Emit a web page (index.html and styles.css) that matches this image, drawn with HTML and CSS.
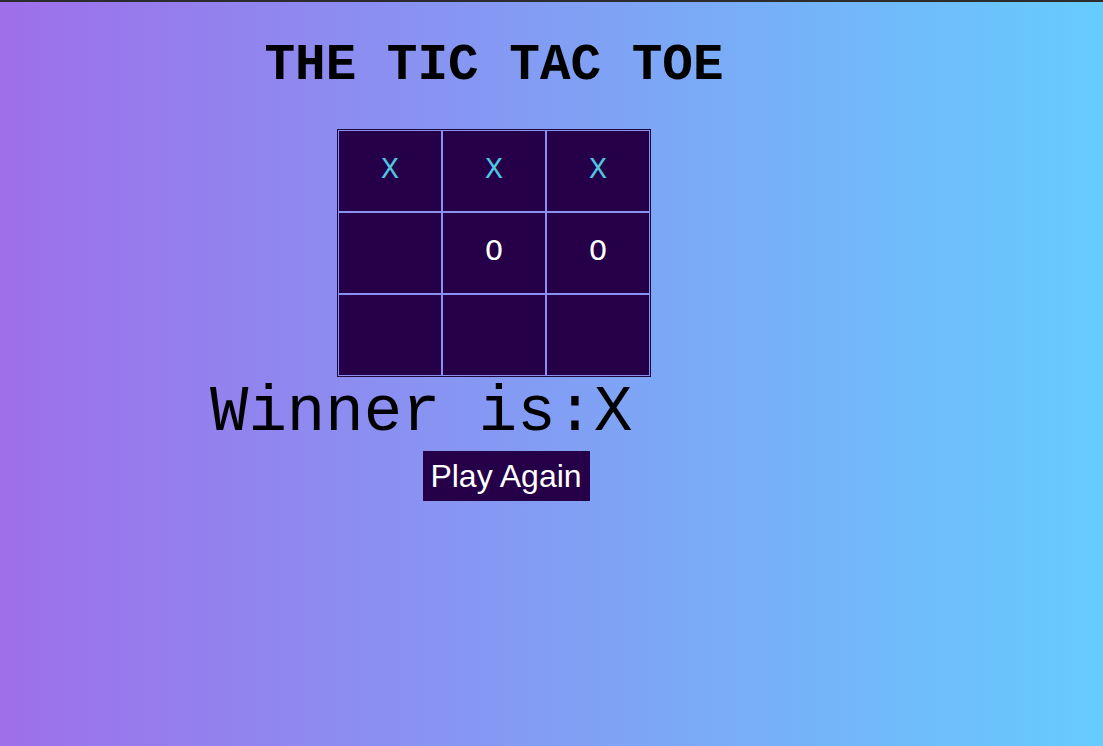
FILE: index.html
```html
<!DOCTYPE html>
<html>
<head>
<meta charset="utf-8">
<link rel="stylesheet" href="styles.css">
</head>
<body>
<div class="page">
  <h1 class="title">THE TIC TAC TOE</h1>
  <div class="board">
    <div class="cell x">X</div>
    <div class="cell x">X</div>
    <div class="cell x">X</div>
    <div class="cell"></div>
    <div class="cell o">O</div>
    <div class="cell o">O</div>
    <div class="cell"></div>
    <div class="cell"></div>
    <div class="cell"></div>
  </div>
  <div class="winner">Winner is:X</div>
  <div class="actions"><button class="again">Play Again</button></div>
</div>
</body>
</html>
```

FILE: styles.css
```css
html, body {
  margin: 0;
  height: 100%;
}
body {
  background: linear-gradient(to right, #9e6fea, #66ccfe);
  border-top: 2px solid #2c2c2e;
  box-sizing: border-box;
  font-family: "Courier New", Courier, "Nimbus Mono PS", "Nimbus Mono L", FreeMono, "Liberation Mono", monospace;
}
.page {
  width: 988px;
  display: flex;
  flex-direction: column;
  align-items: center;
}
.title {
  margin: 36px 0 0 0;
  font-size: 51px;
  font-weight: bold;
  line-height: 56px;
  color: #000;
}
.board {
  margin-top: 35px;
  display: grid;
  grid-template-columns: repeat(3, 102px);
  grid-template-rows: repeat(3, 80px);
  gap: 2px;
  padding: 1px;
  background: #8a90ef;
  border: 1px solid #1c0a3c;
}
.cell {
  background: #250048;
  display: flex;
  align-items: center;
  justify-content: center;
  font-size: 30px;
  padding-bottom: 3px;
  box-sizing: border-box;
}
.cell.x { color: #4fc6e0; }
.cell.o { color: #ffffff; }
.winner {
  align-self: flex-start;
  margin-left: 210px;
  margin-top: 6px;
  font-size: 64px;
  line-height: 60px;
  color: #000;
}
.actions {
  margin-top: 8px;
  padding-left: 24px;
}
.again {
  background: #250048;
  color: #fff;
  border: none;
  font-family: "Liberation Sans", Arial, sans-serif;
  font-size: 32px;
  padding: 0;
  height: 50px;
  width: 167px;
}
```
